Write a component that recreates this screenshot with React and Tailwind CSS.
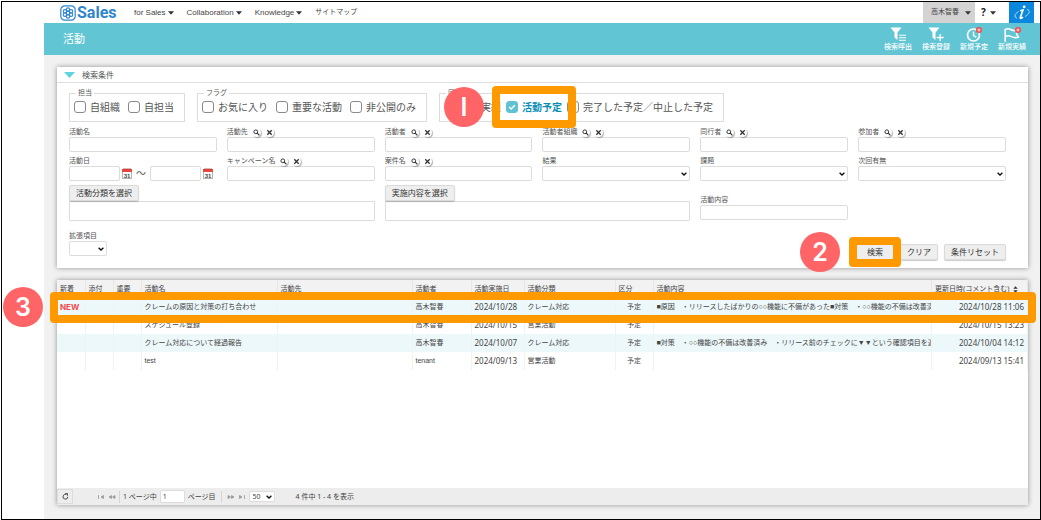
import React from "react";

const FONT = "font-['Noto_Sans','Noto_Sans_CJK_JP',sans-serif]";
const FIELD =
  "h-[15px] w-full min-w-0 rounded-[2px] border border-[#dcdcdc] bg-white px-1 text-[8px] text-[#444] outline-none";
const BUTTON =
  "relative h-4 rounded-[2px] border border-[#dadada] bg-[#eeeeee] px-[6px] text-[8px] leading-[12px] whitespace-nowrap text-[#333] shadow-[0_1px_1px_rgba(0,0,0,0.2)]";

function Caret() {
  return (
    <svg className="h-[4px] w-[6px]" viewBox="0 0 6 4" aria-hidden="true">
      <path d="M0 0.3h6L3 3.8z" fill="#333" />
    </svg>
  );
}

function Chevron() {
  return (
    <svg
      className="pointer-events-none absolute top-1/2 right-[3px] h-[4px] w-[6px] -translate-y-1/2"
      viewBox="0 0 6 4"
      aria-hidden="true"
    >
      <path d="M0.6 0.8L3 3L5.4 0.8" fill="none" stroke="#111" strokeWidth="1.4" />
    </svg>
  );
}

function Select({ id, options = [""], className = "" }) {
  return (
    <span className={"relative block " + className}>
      <select id={id} className={FIELD + " block appearance-none"}>
        {options.map((o) => (
          <option key={o}>{o}</option>
        ))}
      </select>
      <Chevron />
    </span>
  );
}

function RoundButton({ label, children }) {
  return (
    <button
      type="button"
      aria-label={label}
      className="flex size-[9px] items-center justify-center rounded-full bg-white shadow-[1px_1px_1px_rgba(0,0,0,0.3)]"
    >
      <svg className="size-[7px]" viewBox="0 0 7 7" fill="none" stroke="#333" aria-hidden="true">
        {children}
      </svg>
    </button>
  );
}

function Field({ id, label, lookup, children }) {
  return (
    <div className="min-w-0">
      <div className="flex h-[10px] items-center gap-[4px]">
        <label htmlFor={id} className="text-[7px] leading-[10px] whitespace-nowrap">
          {label}
        </label>
        {lookup && (
          <>
            <RoundButton label={label + "を検索"}>
              <circle cx="2.8" cy="2.8" r="1.9" strokeWidth="1" />
              <path d="M4.2 4.2L6.4 6.4" strokeWidth="1.2" />
            </RoundButton>
            <RoundButton label={label + "をクリア"}>
              <path d="M1.3 1.3L5.7 5.7M5.7 1.3L1.3 5.7" strokeWidth="1.3" />
            </RoundButton>
          </>
        )}
      </div>
      {children || <input id={id} type="text" className={FIELD + " block"} />}
    </div>
  );
}

function Check({ label, checked, children }) {
  return (
    <label
      className={
        "relative flex items-center gap-1 text-[10px] leading-[14px] whitespace-nowrap " +
        (checked ? "font-bold text-[#0a8fb4]" : "")
      }
    >
      <span className="relative block size-3">
        <input
          type="checkbox"
          defaultChecked={checked}
          className="peer block size-3 appearance-none rounded-[3px] border border-[#8a8a8a] bg-white checked:border-[#5fc3d4] checked:bg-[#5fc3d4]"
        />
        <svg
          className="pointer-events-none absolute top-0 left-0 hidden size-3 peer-checked:block"
          viewBox="0 0 12 12"
          aria-hidden="true"
        >
          <path d="M3.2 6l2 2L8.8 4.3" fill="none" stroke="#fff" strokeWidth="1.5" />
        </svg>
      </span>
      {label}
      {children}
    </label>
  );
}

function Group({ legend, className = "gap-[8px] pl-1", children }) {
  return (
    <fieldset className="border border-[#dcdcdc]">
      <legend className="ml-[6px] px-[2px] text-[7px] leading-[10px]">{legend}</legend>
      <div className={"flex pt-[2px] pr-[10px] pb-[7px] " + className}>{children}</div>
    </fieldset>
  );
}

function Step({ n, className }) {
  return (
    <span
      className={
        "absolute z-20 flex size-10 items-center justify-center rounded-full bg-[#ff6467] font-['Inter','Noto_Sans',sans-serif] text-[25px] leading-none font-semibold text-white " +
        className
      }
    >
      {n}
    </span>
  );
}

function Calendar({ label }) {
  return (
    <button type="button" aria-label={label} className="shrink-0">
      <svg className="h-[11px] w-[10px]" viewBox="0 0 10 11" aria-hidden="true">
        <rect x="0.5" y="1.5" width="9" height="9" fill="#fff" stroke="#b5b5b5" />
        <rect x="0" y="1" width="10" height="3" fill="#e8483f" />
        <path d="M2 0v2M4 0v2M6 0v2M8 0v2" stroke="#a33" strokeWidth="0.7" />
        <text x="5" y="9.6" fontSize="6" fontWeight="700" textAnchor="middle" fill="#444" fontFamily="Liberation Sans">
          31
        </text>
      </svg>
    </button>
  );
}

const FUNNEL = "M0.5 0.5h11L7.5 5.5v7.5L4.5 10.5V5.5z";
const TOOLS = [
  {
    label: "検索呼出",
    icon: (
      <>
        <path d={FUNNEL} fill="#fff" />
        <path d="M9 8.2h7M9 10.7h7M9 13.2h7" stroke="#fff" strokeWidth="1.1" />
      </>
    ),
  },
  {
    label: "検索登録",
    icon: (
      <>
        <path d={FUNNEL} fill="#fff" />
        <path d="M12.2 7v7M8.7 10.5h7" stroke="#fff" strokeWidth="1.3" />
      </>
    ),
  },
  {
    label: "新規予定",
    icon: (
      <>
        <circle cx="7.5" cy="8" r="6" fill="none" stroke="#fff" strokeWidth="1.7" />
        <path d="M7.5 4.5V8.5l2.8 1.6" fill="none" stroke="#fff" strokeWidth="1.4" />
        <circle cx="13" cy="3" r="3" fill="#f5484b" />
        <path d="M13 1.3v3.4M11.3 3h3.4" stroke="#fff" strokeWidth="0.8" />
      </>
    ),
  },
  {
    label: "新規実績",
    icon: (
      <>
        <path
          d="M1.2 15V2.5C3.5 1.2 5.5 1.8 7.3 2.8S11.5 4 14.2 3.2L12.5 6.8l1.9 3.4c-3 .8-5 .4-7-.6s-4-1.3-6.1-.1"
          fill="none"
          stroke="#fff"
          strokeWidth="1.6"
        />
        <circle cx="14" cy="3" r="3" fill="#f5484b" />
        <path d="M14 1.3v3.4M12.3 3h3.4" stroke="#fff" strokeWidth="0.8" />
      </>
    ),
  },
];

const ROWS = [
  {
    isNew: true,
    name: "クレームの原因と対策の打ち合わせ",
    person: "高木智春",
    date: "2024/10/28",
    kind: "クレーム対応",
    body: "■原因　・リリースしたばかりの○○機能に不備があった■対策　・○○機能の不備は改善済み",
    updated: "2024/10/28 11:06",
  },
  {
    name: "スケジュール登録",
    person: "高木智春",
    date: "2024/10/15",
    kind: "営業活動",
    body: "",
    updated: "2024/10/15 13:23",
  },
  {
    name: "クレーム対応について経過報告",
    person: "高木智春",
    date: "2024/10/07",
    kind: "クレーム対応",
    body: "■対策　・○○機能の不備は改善済み　・リリース前のチェックに▼▼という確認項目を追加",
    updated: "2024/10/04 14:12",
  },
  {
    name: "test",
    person: "tenant",
    date: "2024/09/13",
    kind: "営業活動",
    body: "",
    updated: "2024/09/13 15:41",
  },
];

const COLUMNS = [
  ["新着", "w-[28px]"],
  ["添付", "w-[28px]"],
  ["重要", "w-[28px]"],
  ["活動名", "w-[136px]"],
  ["活動先", "w-[135px]"],
  ["活動者", "w-[59px]"],
  ["活動実施日", "w-[53px]"],
  ["活動分類", "w-[91px]"],
  ["区分", "w-[38px]"],
  ["活動内容", ""],
  ["更新日時(コメント含む)", "w-[96px]"],
];

function Header() {
  return (
    <header>
      <div className="flex h-[21px] items-center bg-white pl-4">
        <a href="#home" className="flex w-[74px] items-center gap-px text-[#2f86cb]">
          <svg className="size-4" viewBox="0 0 16 16" fill="none" stroke="#2f86cb" aria-hidden="true">
            <rect x="0.8" y="0.8" width="14.4" height="14.4" rx="4" strokeWidth="1.2" />
            <circle cx="8" cy="8" r="1.8" strokeWidth="1.2" />
            <circle cx="8" cy="4.6" r="1.7" strokeWidth="1.1" />
            <circle cx="8" cy="11.4" r="1.7" strokeWidth="1.1" />
            <circle cx="4.9" cy="6.3" r="1.7" strokeWidth="1.1" />
            <circle cx="11.1" cy="6.3" r="1.7" strokeWidth="1.1" />
            <circle cx="4.9" cy="9.7" r="1.7" strokeWidth="1.1" />
            <circle cx="11.1" cy="9.7" r="1.7" strokeWidth="1.1" />
          </svg>
          <span className="font-['Roboto',sans-serif] text-[16px] leading-4 font-bold">Sales</span>
        </a>
        <nav className="flex flex-1 items-center gap-[13px] font-['Liberation_Sans','Noto_Sans_CJK_JP',sans-serif] text-[8px] text-[#444]">
          {["for Sales", "Collaboration", "Knowledge"].map((t) => (
            <button key={t} type="button" className="flex items-center gap-[2px]">
              {t}
              <Caret />
            </button>
          ))}
          <a href="#sitemap" className="text-[7px]">
            サイトマップ
          </a>
        </nav>
        <button type="button" className="flex h-full items-center gap-[6px] bg-[#d3d3d3] pr-1 pl-2 text-[7px] text-[#444]">
          高木智春
          <Caret />
        </button>
        <button type="button" aria-label="ヘルプ" className="flex h-full w-[34px] items-center gap-1 pl-[6px] text-[10px] font-bold text-[#222]">
          ?<Caret />
        </button>
        <a href="#info" aria-label="インフォメーション" className="mr-[6px] flex h-full w-[25px] items-center justify-center bg-[#0b87de]">
          <svg className="size-5" viewBox="0 0 20 20" fill="none" stroke="#fff" aria-hidden="true">
            <path d="M8.2 7.8l2.8-.8-2.6 7.3c-.5 1.5.7 1.5 2.6-.2" strokeWidth="1.7" />
            <circle cx="12.2" cy="3.8" r="1.4" fill="#fff" stroke="none" />
            <path d="M6.500 8.500C2.500 11 1.800 14.300 5 15.200M13 13.600C17.500 10.800 19 7.600 15 6.400" strokeWidth="0.7" />
          </svg>
        </a>
      </div>
      <div className="flex h-8 items-center justify-between bg-[#62c5d4] pr-[14px] pl-[19px] text-white">
        <h1 className="text-[11px] leading-4">活動</h1>
        <div className="flex gap-[10px]">
          {TOOLS.map((t) => (
            <button key={t.label} type="button" className="flex flex-col items-center text-[7px] leading-[9px] font-medium">
              <svg className="h-[15px] w-[17px]" viewBox="0 0 17 15" aria-hidden="true">
                {t.icon}
              </svg>
              {t.label}
            </button>
          ))}
        </div>
      </div>
    </header>
  );
}

function SearchPanel() {
  return (
    <section className="bg-white text-[#555] shadow-[0_0_5px_rgba(0,0,0,0.4)]">
      <h2 className="flex h-4 items-center gap-[7px] border-b border-[#dedede] pl-[7px] text-[8px] leading-[15px]">
        <svg className="h-[6px] w-[11px]" viewBox="0 0 11 6" aria-hidden="true">
          <path d="M0 0h11L5.5 6z" fill="#5fd3df" />
        </svg>
        検索条件
      </h2>
      <form className="pt-[5px] pr-[22px] pb-[8px] pl-3" onSubmit={(e) => e.preventDefault()}>
        <div className="flex gap-3">
          <Group legend="担当">
            <Check label="自組織" />
            <Check label="自担当" />
          </Group>
          <Group legend="フラグ">
            <Check label="お気に入り" />
            <Check label="重要な活動" />
            <Check label="非公開のみ" />
          </Group>
          <Group legend="区分" className="gap-[5px] pl-[5px]">
            <Check label="活動実績" />
            <Check label="活動予定" checked>
              <span className="pointer-events-none absolute -inset-x-[14px] -inset-y-[14px] z-10 rounded-[4px] border-8 border-[#ff9900]" />
              <Step n="I" className="top-[-13px] left-[-62px]" />
            </Check>
            <Check label="完了した予定／中止した予定" />
          </Group>
        </div>

        <div className="mt-[5px] grid grid-cols-6 gap-x-[10px] gap-y-1">
          <Field id="name" label="活動名" />
          <Field id="place" label="活動先" lookup />
          <Field id="person" label="活動者" lookup />
          <Field id="org" label="活動者組織" lookup />
          <Field id="companion" label="同行者" lookup />
          <Field id="participant" label="参加者" lookup />

          <Field id="from" label="活動日">
            <div className="flex items-center text-[10px] leading-[15px]">
              <input id="from" type="text" className={FIELD + " max-w-[51px]"} />
              <span className="ml-[2px] flex">
                <Calendar label="開始日を選択" />
              </span>
              <span className="mx-1">～</span>
              <input type="text" aria-label="活動日（終了）" className={FIELD + " max-w-[51px]"} />
              <span className="ml-[2px] flex">
                <Calendar label="終了日を選択" />
              </span>
            </div>
          </Field>
          <Field id="campaign" label="キャンペーン名" lookup />
          <Field id="deal" label="案件名" lookup />
          <Field id="result" label="結果">
            <Select id="result" />
          </Field>
          <Field id="issue" label="課題">
            <Select id="issue" />
          </Field>
          <Field id="next" label="次回有無">
            <Select id="next" />
          </Field>

          {["活動分類を選択", "実施内容を選択"].map((t) => (
            <div key={t} className="col-span-2">
              <button type="button" className={BUTTON + " block"}>
                {t}
              </button>
              <div className="h-5 rounded-[1px] border border-[#dcdcdc] bg-white" />
            </div>
          ))}
          <div className="pt-[10px]">
            <Field id="content" label="活動内容" />
          </div>
        </div>

        <div className="mt-[10px] flex items-end justify-between">
          <div className="pb-[4px]">
            <Field id="extra" label="拡張項目">
              <Select id="extra" className="w-[38px]" />
            </Field>
          </div>
          <div className="flex gap-[6px]">
            <button type="submit" className={BUTTON + " w-[38px]"}>
              検索
              <span className="pointer-events-none absolute -inset-x-[8px] -inset-y-[8px] z-10 rounded-[4px] border-8 border-[#ff9900]" />
              <Step n="2" className="top-[-13px] left-[-57px]" />
            </button>
            <button type="button" className={BUTTON}>
              クリア
            </button>
            <button type="button" className={BUTTON}>
              条件リセット
            </button>
          </div>
        </div>
      </form>
    </section>
  );
}

function PagerIcon({ label, d }) {
  return (
    <button type="button" aria-label={label} className="flex">
      <svg className="h-[6px] w-2" viewBox="0 0 8 6" fill="#999" stroke="#999" strokeWidth="0.8" aria-hidden="true">
        <path d={d} />
      </svg>
    </button>
  );
}

function Results() {
  const head = "overflow-hidden border-r border-[#e6e6e6] px-[3px] text-left font-normal whitespace-nowrap";
  const cell = "overflow-hidden border-r border-[#f0f3f3] px-[3px] whitespace-nowrap";
  const num = " font-['Noto_Sans',sans-serif] text-[8px]";
  return (
    <section className="relative flex flex-1 flex-col bg-white text-[#444] shadow-[0_0_5px_rgba(0,0,0,0.4)]">
      <table className="w-full table-fixed border-collapse font-['Liberation_Sans','Noto_Sans_CJK_JP',sans-serif] text-[7px] leading-[10px]">
        <thead>
          <tr className="h-[18px] bg-[#f2f2f2]">
            {COLUMNS.map(([t, w], i) => (
              <th key={t} scope="col" className={head + " " + w}>
                {i === COLUMNS.length - 1 ? (
                  <span className="flex items-center gap-[3px]">
                    {t}
                    <svg className="h-[7px] w-[5px]" viewBox="0 0 5 7" fill="#333" aria-hidden="true">
                      <path d="M0.3 2.7L2.5 0.3L4.7 2.700zM0.3 4.3h4.400L2.5 6.700z" />
                    </svg>
                  </span>
                ) : (
                  t
                )}
              </th>
            ))}
          </tr>
        </thead>
        <tbody>
          {ROWS.map((r) => (
            <tr key={r.updated} className="h-[18px] odd:bg-[#edf8fa]">
              <td className={cell + " overflow-visible font-['Inter',sans-serif] text-[8px] font-bold text-[#f04a4a]"}>
                {r.isNew ? "NEW" : ""}
              </td>
              <td className={cell} />
              <td className={cell} />
              <td className={cell}>{r.name}</td>
              <td className={cell} />
              <td className={cell}>{r.person}</td>
              <td className={cell + num}>{r.date}</td>
              <td className={cell}>{r.kind}</td>
              <td className={cell + " text-center"}>予定</td>
              <td className={cell}>{r.body}</td>
              <td className={cell + num + " text-right"}>{r.updated}</td>
            </tr>
          ))}
        </tbody>
      </table>
      <span className="pointer-events-none absolute top-3 -right-2 -left-[7px] z-10 h-[31px] rounded-[4px] border-8 border-[#ff9900]" />
      <Step n="3" className="top-[7px] left-[-54px]" />

      <footer className="mt-auto flex h-[17px] items-center bg-[#ededed] text-[8px] leading-[10px]">
        <button type="button" aria-label="再読み込み" className="mr-6 flex h-[15px] w-4 items-center justify-center border border-[#dcdcdc]">
          <svg className="size-[7px]" viewBox="0 0 7 7" fill="none" stroke="#444" strokeWidth="0.9" aria-hidden="true">
            <path d="M5.8 3.8A2.4 2.4 0 1 1 4.5 1.6M3.3 0.5h2.2v2.2" />
          </svg>
        </button>
        <div className="flex items-center gap-[3px]">
          <PagerIcon label="最初のページ" d="M1.5 1v4M6.5 1.5v3L4 3z" />
          <PagerIcon label="前のページ" d="M3.5 1.5v3L1 3zM7 1.5v3L4.5 3z" />
          <span className="h-3 w-px bg-[#d5d5d5]" />
          <label htmlFor="page" className="text-[7px] whitespace-nowrap">
            1 ページ中
          </label>
          <input id="page" type="text" defaultValue="1" className="h-[13px] w-[25px] rounded-[2px] border border-[#dcdcdc] bg-white px-[2px] text-[7px]" />
          <span className="text-[7px]">ページ目</span>
          <span className="mx-[2px] h-3 w-px bg-[#d5d5d5]" />
          <PagerIcon label="次のページ" d="M1 1.5v3L3.5 3zM4.5 1.5v3L7 3z" />
          <PagerIcon label="最後のページ" d="M1.5 1.5v3L4 3zM6.5 1v4" />
          <span className="relative">
            <select aria-label="表示件数" className="block h-[11px] w-[26px] appearance-none rounded-[2px] border border-[#dcdcdc] bg-white px-[3px] text-[7px] leading-[9px]">
              <option>50</option>
              <option>100</option>
            </select>
            <Chevron />
          </span>
          <span className="ml-[18px] text-[7px] whitespace-nowrap">4 件中 1 - 4 を表示</span>
        </div>
      </footer>
    </section>
  );
}

export default function App() {
  return (
    <div className="flex min-h-screen flex-col bg-white pt-px pl-px">
      <div className={"flex flex-1 flex-col border border-black pl-[42px] " + FONT}>
        <div className="flex flex-1 flex-col bg-[#f1f1f1]">
          <Header />
          <main className="flex flex-1 flex-col gap-3 pt-3 pr-3 pb-[14px] pl-[13px]">
            <SearchPanel />
            <Results />
          </main>
        </div>
      </div>
    </div>
  );
}
